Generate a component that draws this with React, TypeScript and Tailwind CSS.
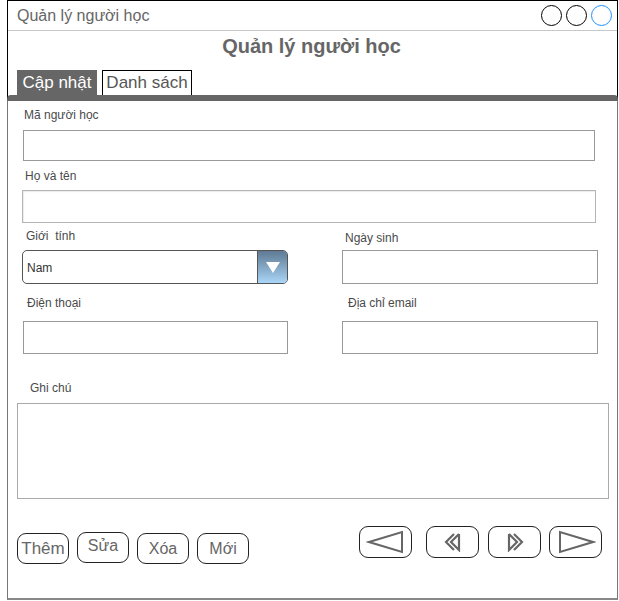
import React from "react";

const font = { fontFamily: '"Liberation Sans", Arial, sans-serif' };

function Label({ children, className = "" }: { children: React.ReactNode; className?: string }) {
  return <div className={`text-[12px] leading-[14px] text-[#4a4a4a] whitespace-pre ${className}`}>{children}</div>;
}

function Btn({ children, className = "" }: { children: React.ReactNode; className?: string }) {
  return (
    <div className={`w-[52px] h-[31px] rounded-[9px] border border-[#222] flex items-center justify-center text-[16px] text-[#666] ${className}`}>
      {children}
    </div>
  );
}

function NavBtn({ children, className = "" }: { children: React.ReactNode; className?: string }) {
  return (
    <div className={`w-[53px] h-[32px] rounded-[9px] border border-[#222] flex items-center justify-center ${className}`}>
      {children}
    </div>
  );
}

export default function App() {
  return (
    <div className="w-[619px] h-[601px] bg-white" style={font}>
      <div className="ml-[7px] w-[611px] h-[600px] border-t border-x border-black flex flex-col">
        {/* title bar */}
        <div className="h-[30px] border-b border-[#c8c8c8] flex items-center justify-between pl-[9px] pr-[5px]">
          <span className="text-[16px] text-[#666]">Quản lý người học</span>
          <div className="flex gap-[4px] items-center">
            <div className="w-[21px] h-[21px] rounded-full border border-black" />
            <div className="w-[21px] h-[21px] rounded-full border border-black" />
            <div className="w-[21px] h-[21px] rounded-full border border-[#1e90ff]" />
          </div>
        </div>
        {/* heading */}
        <div className="mt-[4px] leading-[23px] text-center text-[20px] font-bold text-[#666] pr-[2px]">Quản lý người học</div>
        {/* tabs */}
        <div className="mt-[12px] flex items-end ml-[9px] gap-[5px]">
          <div className="w-[80px] h-[25px] bg-[#666] text-white text-[17px] flex items-center justify-center">Cập nhật</div>
          <div className="w-[90px] h-[25px] border-t border-x border-black text-[#555] text-[17px] flex items-center justify-center">Danh sách</div>
        </div>
        {/* panel */}
        <div className="flex-1 -mx-px border-t-[6px] border-t-[#666] border-x border-x-[#777] border-b-2 border-b-[#888] rounded-t-[4px] flex flex-col">
          <Label className="mt-[7px] ml-[16px]">Mã người học</Label>
          <div className="mt-[8px] ml-[15px] w-[572px] h-[31px] border border-[#999]" />
          <Label className="mt-[8px] ml-[17px]">Họ và tên</Label>
          <div className="mt-[7px] ml-[14px] w-[574px] h-[33px] border border-[#b5b5b5] shadow-[inset_1px_1px_1px_rgba(0,0,0,0.08)]" />

          <div className="flex mt-[6px]">
            <div className="flex flex-col ml-[14px] w-[266px]">
              <Label className="ml-[4px]">Giới  tính</Label>
              <div className="mt-[7px] w-[266px] h-[34px] rounded-[5px] border border-[#555] flex overflow-hidden">
                <div className="flex-1 flex items-center pl-[4px] pt-[2px] text-[12px] text-[#333]">Nam</div>
                <div className="w-[30px] h-full bg-gradient-to-b from-[#5f7a94] to-[#aad6f8] border-l border-[#555] flex items-center justify-center">
                  <svg width="16" height="14" viewBox="0 0 16 14">
                    <polygon points="1,2 15,2 8,13" fill="#fff" />
                  </svg>
                </div>
              </div>
            </div>
            <div className="flex flex-col ml-[54px] w-[256px]">
              <Label className="ml-[3px] mt-[2px]">Ngày sinh</Label>
              <div className="mt-[5px] w-[256px] h-[34px] border border-[#999]" />
            </div>
          </div>

          <div className="flex mt-[12px]">
            <div className="flex flex-col ml-[15px] w-[265px]">
              <Label className="ml-[4px]">Điện thoại</Label>
              <div className="mt-[11px] w-[265px] h-[33px] border border-[#999]" />
            </div>
            <div className="flex flex-col ml-[54px] w-[256px]">
              <Label className="ml-[6px]">Địa chỉ email</Label>
              <div className="mt-[11px] w-[256px] h-[33px] border border-[#999]" />
            </div>
          </div>

          <Label className="mt-[27px] ml-[22px]">Ghi chú</Label>
          <div className="mt-[8px] ml-[9px] w-[592px] h-[96px] border border-[#aaa]" />

          <div className="flex items-start mt-[27px]">
            <div className="flex items-start ml-[9px] gap-[8px] mt-[7px]">
              <Btn className="text-[17px]">Thêm</Btn>
              <Btn className="-mt-px"><span className="-mt-[3px]">Sửa</span></Btn>
              <Btn>Xóa</Btn>
              <Btn>Mới</Btn>
            </div>
            <div className="flex items-start ml-[110px] gap-[9px]">
              <NavBtn>
                <svg width="40" height="24" viewBox="0 0 40 24">
                  <polygon points="3,12 36,2 36,22" fill="none" stroke="#666" strokeWidth="2" />
                </svg>
              </NavBtn>
              <NavBtn className="ml-[5px]">
                <svg width="18" height="20" viewBox="0 0 18 20">
                  <polyline points="10,2 2,10 10,18" fill="none" stroke="#666" strokeWidth="2.2" />
                  <polyline points="15,2 7,10 15,18 15,2" fill="none" stroke="#666" strokeWidth="2.2" />
                </svg>
              </NavBtn>
              <NavBtn>
                <svg width="18" height="20" viewBox="0 0 18 20">
                  <polyline points="3,2 11,10 3,18 3,2" fill="none" stroke="#666" strokeWidth="2.2" />
                  <polyline points="8,2 16,10 8,18" fill="none" stroke="#666" strokeWidth="2.2" />
                </svg>
              </NavBtn>
              <NavBtn className="-ml-px">
                <svg width="40" height="24" viewBox="0 0 40 24">
                  <polygon points="4,2 4,22 37,12" fill="none" stroke="#666" strokeWidth="2" />
                </svg>
              </NavBtn>
            </div>
          </div>
        </div>
      </div>
    </div>
  );
}
